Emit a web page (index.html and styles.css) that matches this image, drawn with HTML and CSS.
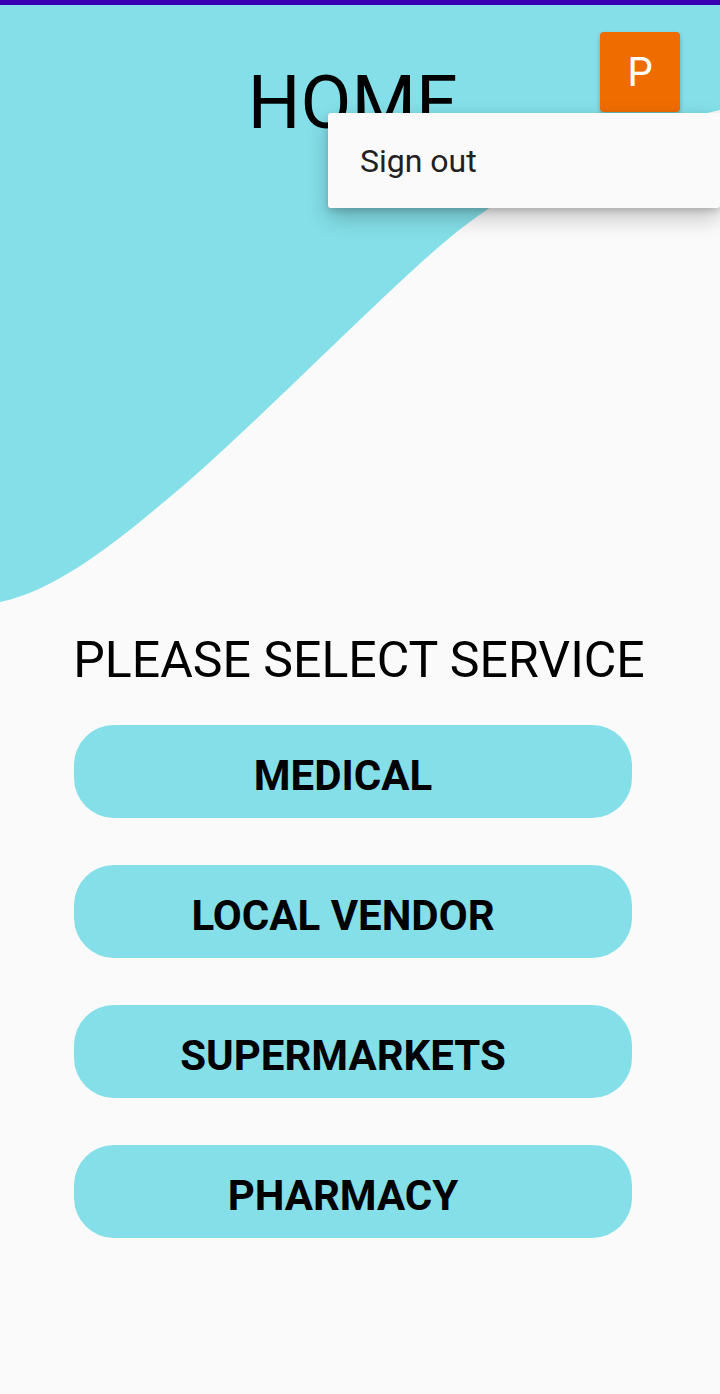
FILE: index.html
```html
<!DOCTYPE html>
<html>
<head>
<meta charset="utf-8">
<link rel="stylesheet" href="styles.css">
</head>
<body>
<div class="statusbar"></div>
<div class="screen">
  <svg class="wave" viewBox="0 0 720 600" width="720" height="600" preserveAspectRatio="none">
    <path d="M0 0 H720 V105 C620 128 520 172 441 240 C380 292 250 424 184 480 C125 530 60 585 0 597 Z" fill="#84dfe8"/>
  </svg>
  <header class="header">
    <h1 class="title">HOME</h1>
    <button class="avatar">P</button>
  </header>
  <main class="content">
    <h2 class="prompt">PLEASE SELECT SERVICE</h2>
    <div class="services">
      <button class="service">MEDICAL</button>
      <button class="service">LOCAL VENDOR</button>
      <button class="service">SUPERMARKETS</button>
      <button class="service">PHARMACY</button>
    </div>
  </main>
  <div class="menu">
    <div class="menu-item">Sign out</div>
  </div>
</div>
</body>
</html>
```

FILE: styles.css
```css
* { box-sizing: border-box; }
html, body {
  margin: 0;
  padding: 0;
}
body {
  width: 720px;
  height: 1394px;
  background: #fafafa;
  font-family: Roboto, "Noto Sans", sans-serif;
  color: #000;
  overflow: hidden;
}
.statusbar {
  height: 5px;
  background: #3700b3;
}
.screen {
  position: relative;
  height: 1389px;
}
.wave {
  position: absolute;
  left: 0;
  top: 0;
  display: block;
}
.header {
  position: relative;
  padding: 61px 14px 0 0;
  text-align: center;
}
.title {
  margin: 0;
  font-weight: 400;
  font-size: 74px;
  line-height: 74px;
  letter-spacing: 0;
}
.avatar {
  position: absolute;
  top: 27px;
  right: 40px;
  width: 80px;
  height: 80px;
  border: 0;
  border-radius: 4px;
  background: #ef6c00;
  color: #fff;
  font-family: Roboto, sans-serif;
  font-size: 40px;
  padding: 0;
  box-shadow: 0 2px 4px rgba(0,0,0,0.25);
}
.content {
  position: relative;
  padding-top: 492px;
}
.prompt {
  margin: 0;
  padding-right: 2px;
  text-align: center;
  font-weight: 400;
  font-size: 50px;
  line-height: 56px;
}
.services {
  display: flex;
  flex-direction: column;
  gap: 47px;
  padding: 37px 88px 0 74px;
}
.service {
  height: 93px;
  border: 0;
  border-radius: 40px;
  background: #84dfe8;
  color: #000;
  font-family: Roboto, sans-serif;
  font-weight: 700;
  font-size: 42px;
  padding: 8px 20px 0 0;
}
.menu {
  position: absolute;
  top: 108px;
  left: 328px;
  right: 0;
  height: 95px;
  background: #fafafa;
  border-radius: 3px;
  box-shadow: 0 10px 22px rgba(0,0,0,0.22), 0 3px 6px rgba(0,0,0,0.15);
  display: flex;
  align-items: center;
}
.menu-item {
  padding-left: 32px;
  font-size: 32px;
  color: #212121;
}
```
